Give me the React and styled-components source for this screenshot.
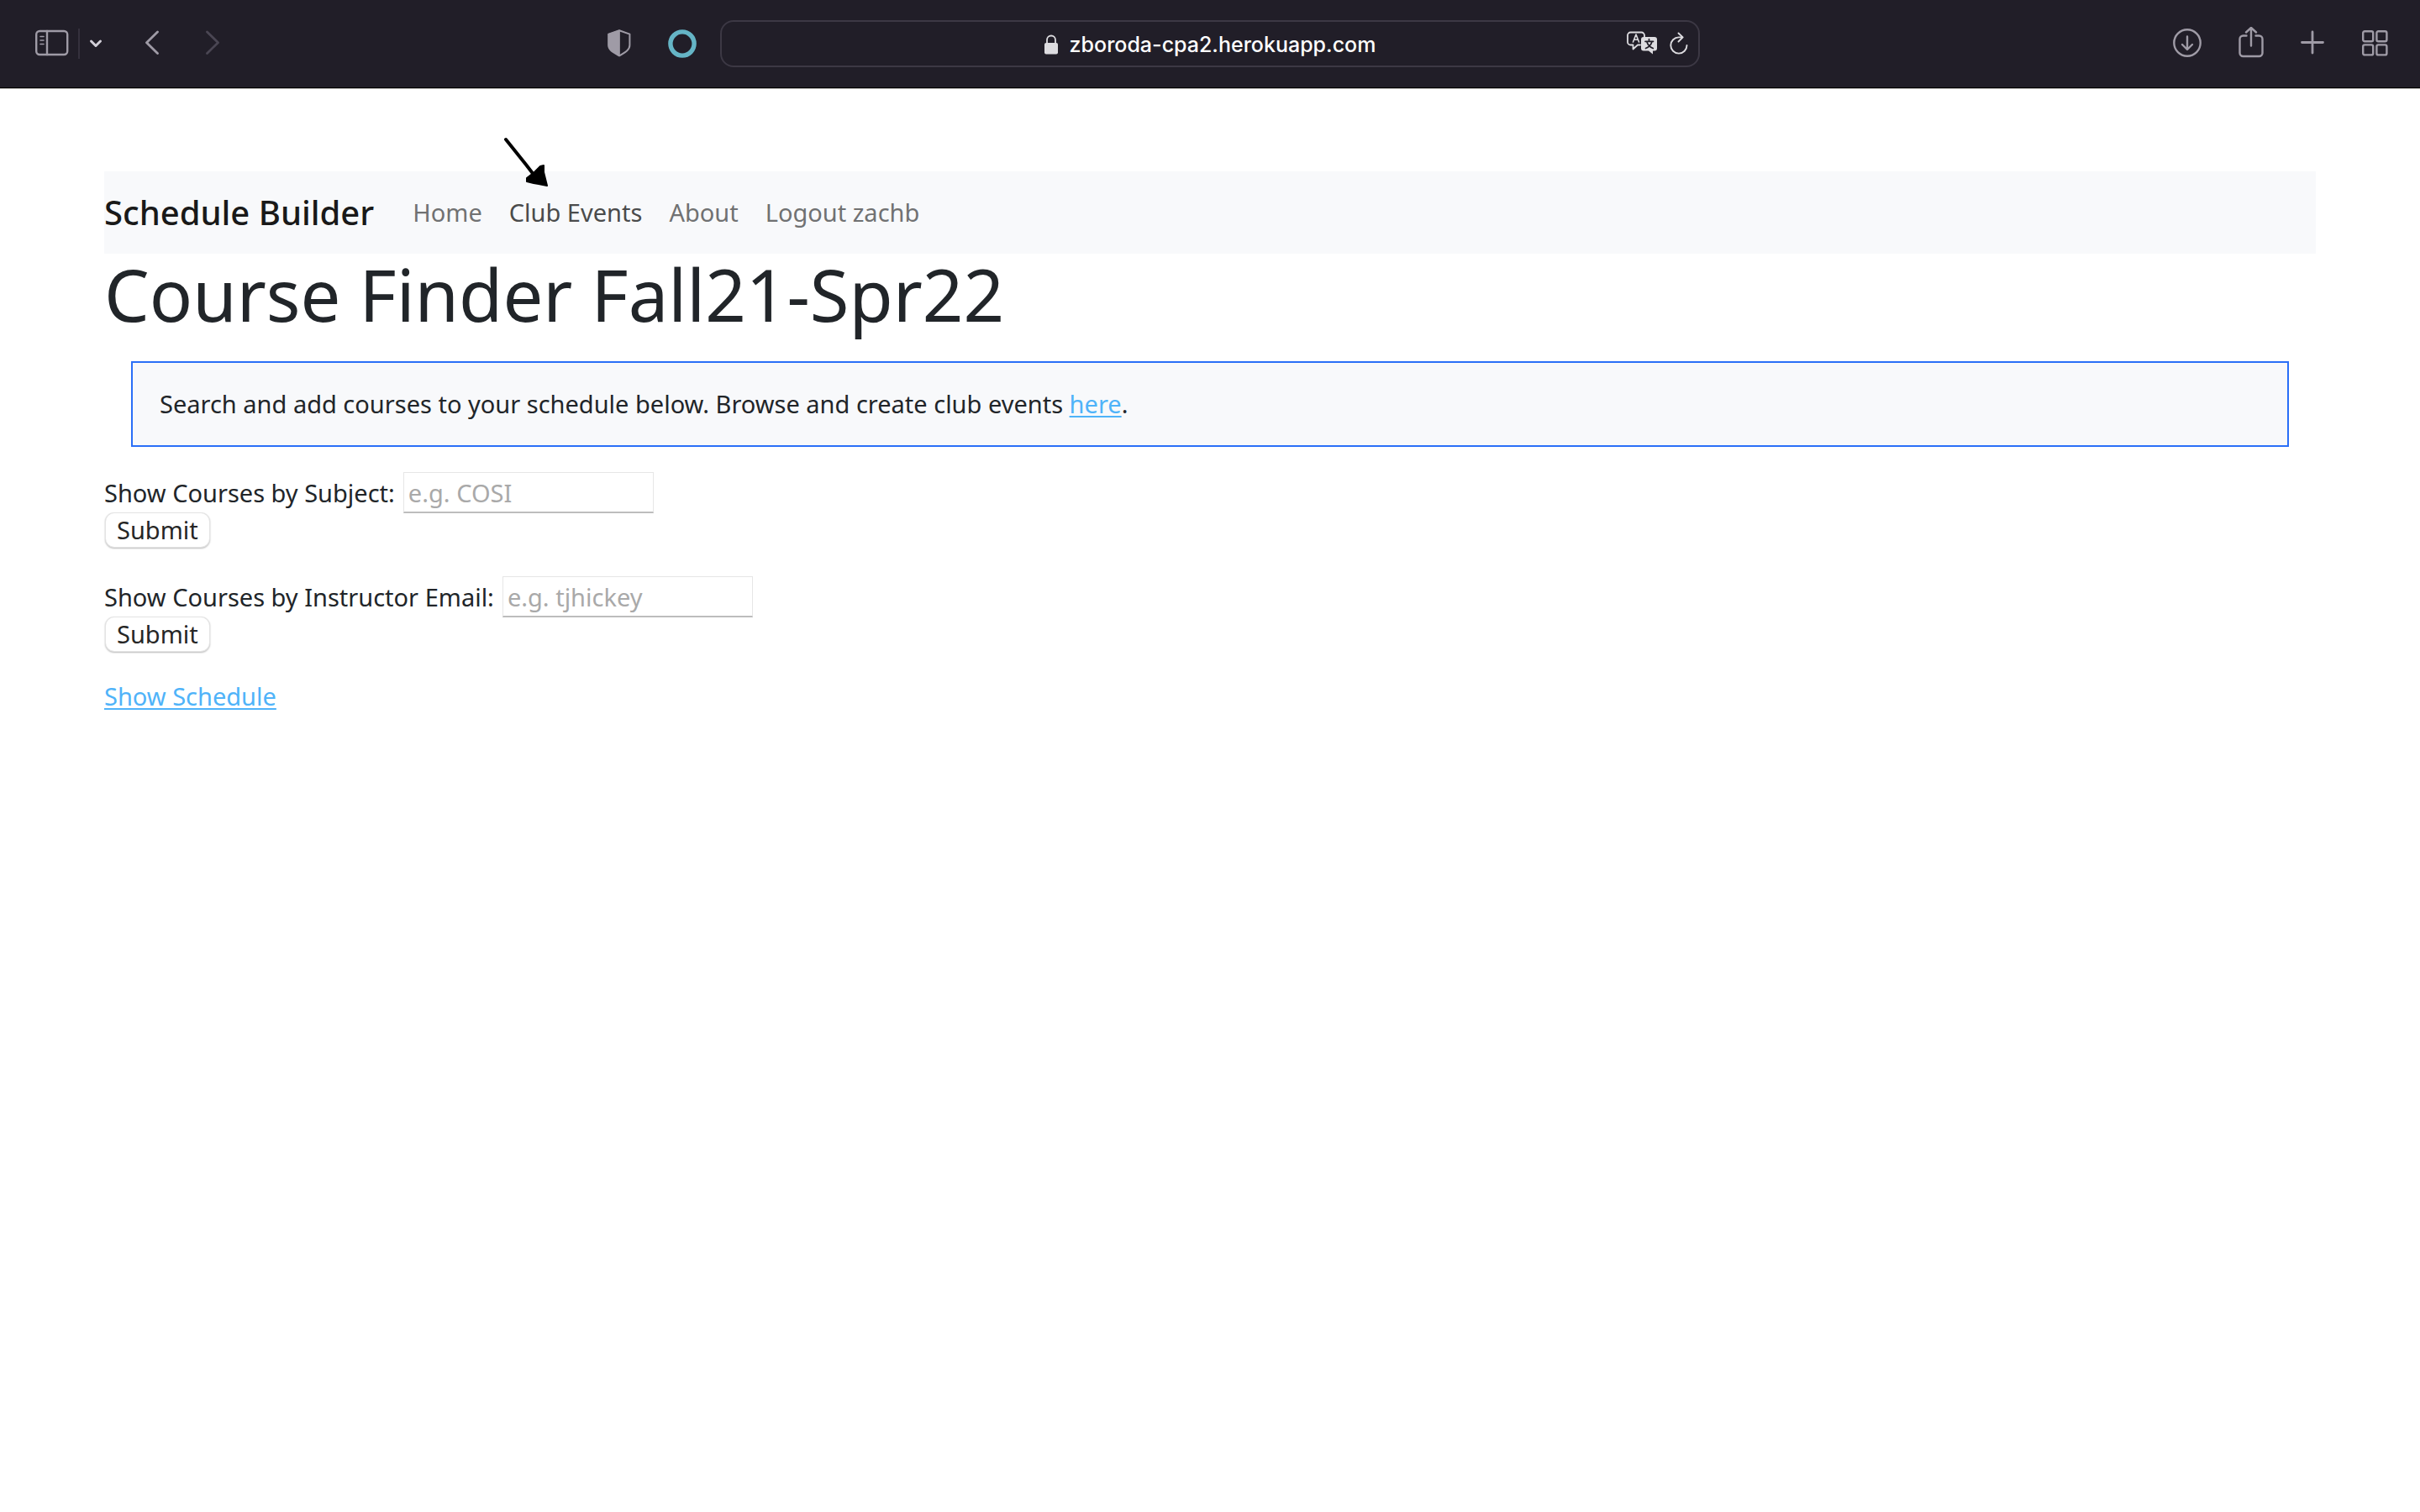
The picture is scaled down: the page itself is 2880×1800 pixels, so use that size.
import React from "react";
import styled, { createGlobalStyle } from "styled-components";

const pageFont = '"Noto Sans", "Open Sans", sans-serif';

const GlobalStyle = createGlobalStyle`
  *, *::before, *::after { box-sizing: border-box; }
  body {
    margin: 0;
    background: #fff;
    color: #212529;
    font-family: ${pageFont};
    font-size: 29px;
    line-height: 48px;
  }
`;

const Toolbar = styled.header`
  display: grid;
  grid-template-columns: 1fr minmax(0, 1166px) 1fr;
  align-items: center;
  height: 106px;
  padding-bottom: 1px;
  background: #211e28;
  border-bottom: 1px solid #b9b7b5;
  box-shadow: inset 0 -1px 0 #000;
`;

const ToolGroup = styled.div`
  display: flex;
  align-items: center;
  gap: ${(p) => p.$gap}px;
`;

const LeftTools = styled.div`
  display: flex;
  align-items: center;
  justify-content: space-between;
  padding: 0 28px 0 42px;
`;

const RightTools = styled.div`
  display: flex;
  align-items: center;
  justify-content: flex-end;
  gap: 44px;
  padding-right: 38px;
`;

const IconButton = styled.button`
  display: flex;
  padding: 0;
  border: 0;
  background: none;
  color: ${(p) => p.$color || "#9f9ba6"};

  svg {
    display: block;
    fill: none;
    stroke: currentColor;
    stroke-width: 2.4;
    stroke-linecap: round;
    stroke-linejoin: round;
  }
`;

const Divider = styled.span`
  width: 2px;
  height: 36px;
  background: #35313d;
`;

const AddressBar = styled.div`
  display: grid;
  grid-template-columns: 1fr auto 1fr;
  align-items: center;
  height: 56px;
  padding: 2px 12px 0;
  border: 2px solid #3c3844;
  border-radius: 16px;
`;

const Address = styled.label`
  grid-column: 2;
  display: flex;
  align-items: center;
  gap: 14px;
`;

const AddressInput = styled.input`
  field-sizing: content;
  padding: 0;
  border: 0;
  outline: 0;
  background: none;
  color: #fff;
  font: 500 25px/40px Inter, sans-serif;
`;

const AddressTools = styled(ToolGroup)`
  justify-content: flex-end;
`;

const Page = styled.main`
  padding: 98px 124px;
`;

const Navbar = styled.nav`
  display: flex;
  align-items: center;
  gap: 46px;
  height: 98px;
  background: #f8f9fb;
`;

const Brand = styled.a`
  color: #191919;
  font-size: 40px;
  font-weight: 500;
  text-decoration: none;
`;

const NavList = styled.ul`
  display: flex;
  gap: 32px;
  margin: 0;
  padding: 0;
  list-style: none;
`;

const NavItem = styled.li`
  position: relative;
`;

const NavLink = styled.a`
  color: ${(p) => (p.$active ? "#4a4b4b" : "#707172")};
  text-decoration: none;
`;

const Pointer = styled.svg`
  position: absolute;
  left: -6px;
  bottom: 54px;
  pointer-events: none;
`;

const Title = styled.h1`
  margin: 0 0 32px;
  font-size: 85px;
  font-weight: 400;
  line-height: 96px;
`;

const Notice = styled.p`
  margin: 0 32px 30px;
  padding: 25px 32px;
  border: 2px solid #2a6ff7;
  background: #f8f9fb;
`;

const TextLink = styled.a`
  color: #4fb3f9;
  text-decoration: underline;
  text-decoration-thickness: 2px;
  text-underline-offset: 3px;
`;

const SearchForm = styled.form`
  display: flex;
  flex-direction: column;
  align-items: flex-start;
  margin-bottom: ${(p) => (p.$last ? 29 : 34)}px;
`;

const Field = styled.div`
  display: flex;
  align-items: center;
  gap: 10px;
`;

const TextInput = styled.input`
  width: 298px;
  height: 49px;
  padding: 0 5px;
  border: 1px solid #e6e6e6;
  border-bottom: 2px solid #bdbdbd;
  outline: 0;
  background: #fff;
  color: #212529;
  font: inherit;

  &::placeholder { color: #a9a9a9; opacity: 1; }
`;

const SubmitButton = styled.button`
  height: 40px;
  margin: 0 2px 1px;
  padding: 0 13px;
  border: 0;
  border-radius: 10px;
  background: #fff;
  box-shadow: 0 0 0 1px #e4e4e4, 0 1px 2px 1px rgba(0, 0, 0, 0.28);
  color: #262626;
  font: inherit;
  line-height: 40px;
`;

function Search({ id, label, placeholder, last }) {
  return (
    <SearchForm $last={last} onSubmit={(e) => e.preventDefault()}>
      <Field>
        <label htmlFor={id}>{label}</label>
        <TextInput id={id} placeholder={placeholder} />
      </Field>
      <SubmitButton type="submit">Submit</SubmitButton>
    </SearchForm>
  );
}

function Icon({ label, w, color, children }) {
  return (
    <IconButton type="button" aria-label={label} $color={color}>
      <svg width={w} height="40" viewBox={`0 0 ${w} 40`}>{children}</svg>
    </IconButton>
  );
}

export default function App() {
  return (
    <>
      <GlobalStyle />
      <Toolbar>
        <LeftTools>
          <ToolGroup $gap={51}>
            <ToolGroup $gap={11}>
              <Icon label="Sidebar" w={40}>
                <rect x="1.2" y="5" width="37" height="28" rx="4" />
                <path d="M14 5v28" />
                <path d="M6 11.5h4M6 16h4M6 20.5h4" strokeWidth="1.6" />
              </Icon>
              <Divider />
              <Icon label="Tab groups" w={16} color="#d2cfd8">
                <path d="M2.5 17l5.5 5.5 5.5-5.5" strokeWidth="3" />
              </Icon>
            </ToolGroup>
            <ToolGroup $gap={56}>
              <Icon label="Back" w={16}>
                <path d="M14.5 6L1.5 18.7l13 12.8" strokeWidth="2.8" />
              </Icon>
              <Icon label="Forward" w={16} color="#4a4653">
                <path d="M1.5 6l13 12.7-13 12.8" strokeWidth="2.8" />
              </Icon>
            </ToolGroup>
          </ToolGroup>
          <ToolGroup $gap={44}>
            <Icon label="Privacy report" w={28}>
              <path d="M14 4.2L26.4 8.6v13.2c0 6.2-6.4 9-12.4 12.6C8 30.8 1.2 28 1.2 21.8V8.6z" strokeWidth="2" />
              <path d="M14 4.2L1.2 8.6v13.2C1.2 28 8 30.8 14 34.4z" fill="currentColor" strokeWidth="1" />
            </Icon>
            <Icon label="Extension" w={34} color="#65b5c6">
              <circle cx="17" cy="20" r="14.1" strokeWidth="5.4" />
            </Icon>
          </ToolGroup>
        </LeftTools>

        <AddressBar>
          <Address>
            <svg width="16" height="24" viewBox="0 0 16 24" aria-hidden="true">
              <path d="M3 11V6.5a5 5 0 0 1 10 0V11" fill="none" stroke="#dddce0" strokeWidth="1.8" />
              <rect y="10" width="16" height="13.5" rx="2" fill="#dddce0" />
            </svg>
            <AddressInput aria-label="Address" defaultValue="zboroda-cpa2.herokuapp.com" />
          </Address>
          <AddressTools $gap={14}>
            <Icon label="Translate" w={38} color="#dddce0">
              <path d="M17 20.5h-3l-5.500 5v-5H5.500A3.500 3.500 0 0 1 2 17V9a3.500 3.500 0 0 1 3.500-3.500h13A3.500 3.500 0 0 1 22 9v2" strokeWidth="1.8" />
              <path d="M8.500 17l3.500-9 3.500 9M9.600 14.300h4.800" strokeWidth="1.6" />
              <path d="M21 11h13a3 3 0 0 1 3 3V24.500a3 3 0 0 1-3 3h-2v4l-5-4h-6a3 3 0 0 1-3-3V14a3 3 0 0 1 3-3z" fill="currentColor" stroke="none" />
              <path d="M27.500 13.500v2.500M23 16.300h9.500M31 16.500c-1 3.500-3.500 6.500-7.500 8M24.800 16.500c1 3.500 3.500 6.500 7.500 8" stroke="#211e28" strokeWidth="1.7" />
            </Icon>
            <Icon label="Reload" w={22} color="#dddce0">
              <path d="M20.500 21a9.600 9.600 0 1 1-9.600-9.600h4.500M10.500 6.500l5.200 4.900-5.200 5.100" strokeWidth="1.9" />
            </Icon>
          </AddressTools>
        </AddressBar>

        <RightTools>
          <Icon label="Downloads" w={34}>
            <circle cx="17" cy="19" r="15.7" />
            <path d="M17 11.5v15M11 21l6 6 6-6" />
          </Icon>
          <Icon label="Share" w={30}>
            <path d="M9.5 10.5H5.5a4 4 0 0 0-4 4V31a4 4 0 0 0 4 4h19a4 4 0 0 0 4-4V14.5a4 4 0 0 0-4-4h-4" />
            <path d="M15 22.5V1.5M9 6.5l6-5.5 6 5.5" />
          </Icon>
          <Icon label="New tab" w={28}>
            <path d="M14 6v25M1.5 18.5h25" strokeWidth="2.8" />
          </Icon>
          <Icon label="Tab overview" w={32}>
            <rect x="2.2" y="5.2" width="12" height="12" rx="2" />
            <rect x="18.4" y="5.2" width="12" height="12" rx="2" />
            <rect x="2.2" y="21.4" width="12" height="12" rx="2" />
            <rect x="18.4" y="21.4" width="12" height="12" rx="2" />
          </Icon>
        </RightTools>
      </Toolbar>

      <Page>
        <Navbar>
          <Brand href="#">Schedule Builder</Brand>
          <NavList>
            <NavItem><NavLink href="#">Home</NavLink></NavItem>
            <NavItem>
              <NavLink href="#" $active>Club Events</NavLink>
              <Pointer width="52" height="60" viewBox="0 0 52 60" aria-hidden="true">
                <path d="M2 3L26 33 36 46" fill="none" stroke="#000" strokeWidth="4" strokeLinecap="round" />
                <path d="M36 42l7-7 4-1v8l2 8 2 8-10-2-6-1-8-2 0-4z" stroke="#000" strokeWidth="2" strokeLinejoin="round" />
              </Pointer>
            </NavItem>
            <NavItem><NavLink href="#">About</NavLink></NavItem>
            <NavItem><NavLink href="#">Logout zachb</NavLink></NavItem>
          </NavList>
        </Navbar>
        <Title>Course Finder Fall21-Spr22</Title>
        <Notice>
          Search and add courses to your schedule below. Browse and create club events{" "}
          <TextLink href="#">here</TextLink>.
        </Notice>
        <Search id="subject" label="Show Courses by Subject:" placeholder="e.g. COSI" />
        <Search id="instructor" label="Show Courses by Instructor Email:" placeholder="e.g. tjhickey" last />
        <TextLink href="#">Show Schedule</TextLink>
      </Page>
    </>
  );
}
